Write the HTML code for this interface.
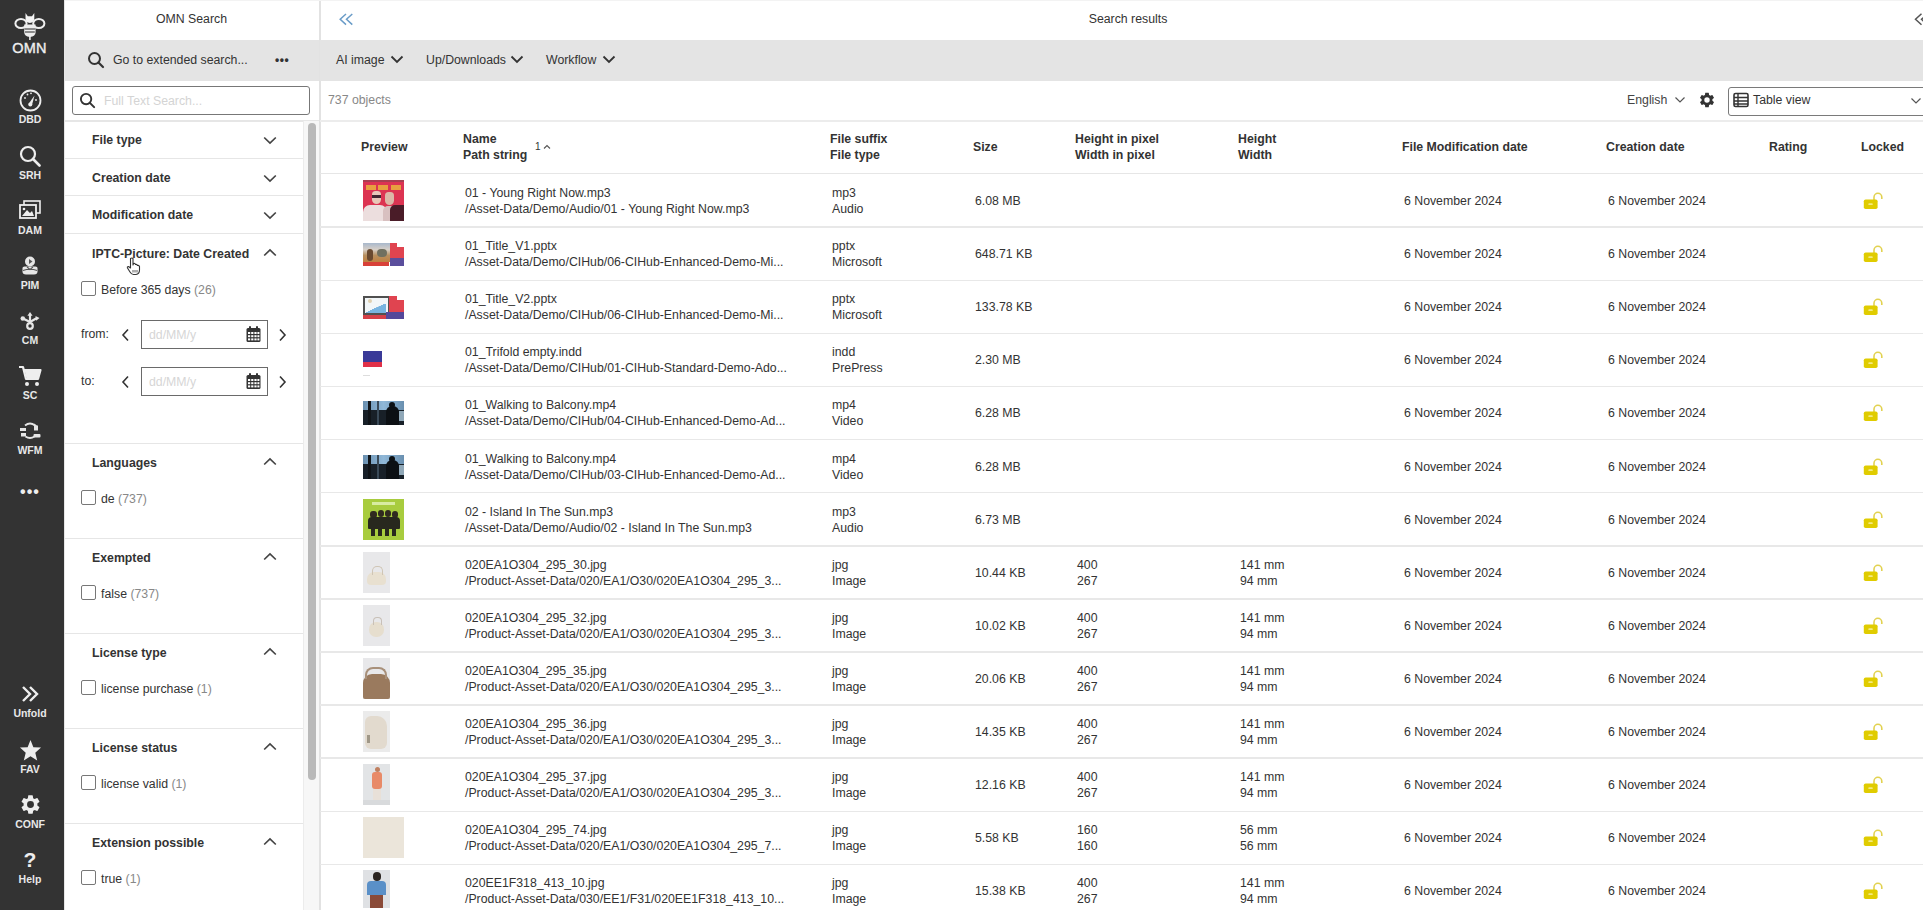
<!DOCTYPE html>
<html><head><meta charset="utf-8"><title>OMN Search</title>
<style>
html,body{margin:0;padding:0;}
body{width:1923px;height:910px;overflow:hidden;position:relative;background:#fff;font-family:"Liberation Sans",sans-serif;color:#333;font-size:12.3px;}
.abs{position:absolute}
#side{position:absolute;left:0;top:0;width:64px;height:910px;background:#333;}
.si{position:absolute;left:0;width:60px;text-align:center;color:#eee}
.sl{position:absolute;left:0;width:60px;text-align:center;color:#e8e8e8;font-size:10.5px;font-weight:bold;line-height:11px}
#fp{position:absolute;left:64px;top:0;width:255px;height:910px;background:#fff}
.hdr{position:absolute;top:0;height:40px;line-height:38px;text-align:center;font-size:12.3px;color:#333}
.tb{position:absolute;top:40px;height:40.5px;background:#e4e4e4}
.sec{position:absolute;left:0;width:240px;border-bottom:1.5px solid #e6e6e6;box-sizing:border-box}
.stitle{position:absolute;left:28px;font-weight:bold;font-size:12.3px;line-height:16px;color:#333}
.chev{position:absolute;left:199px;line-height:0}
.cb{position:absolute;left:17px;width:13px;height:13px;border:1.5px solid #777;border-radius:2px;background:#fff}
.cbl{position:absolute;left:37px;line-height:16px;font-size:12.3px;color:#333}
.cnt{color:#888}
.rowline{position:absolute;left:320px;width:1603px;height:1.6px;background:#e8e8e8}
.th{position:absolute;overflow:hidden}
.c1{position:absolute;line-height:16px;white-space:nowrap}
.c2{position:absolute;line-height:16px;white-space:nowrap}
.hc{position:absolute;font-weight:bold;line-height:16px;white-space:nowrap}
.lock{position:absolute;line-height:0}
</style></head><body>
<div id="side">
  <div class="abs" style="left:14px;top:12px;line-height:0"><svg width="32" height="29" viewBox="0 0 32 29"><g fill="none" stroke="#eee" stroke-width="2"><ellipse cx="7" cy="11.5" rx="5.6" ry="4.6"/><ellipse cx="24.8" cy="11.5" rx="5.6" ry="4.6"/></g><path d="M11.5 1 L13.8 4.2 L18 4.2 L20.3 1 L20.3 6 Q20.5 10.5 15.9 11 Q11.3 10.5 11.5 6 Z" fill="#f4f4f4"/><path d="M10.2 12.5 H21.6 V20 Q21.6 24.5 15.9 25 Q10.2 24.5 10.2 20 Z" fill="#eee"/><g stroke="#555" stroke-width="1.3"><line x1="10.5" y1="17" x2="21.3" y2="17"/><line x1="11" y1="20" x2="20.8" y2="20"/></g><path d="M15.9 24 V28" stroke="#eee" stroke-width="1.6"/></svg></div>
  <div class="abs" style="left:11px;top:41px;width:37px;text-align:center;font-size:14.5px;line-height:14px;letter-spacing:0.3px;color:#eee;-webkit-text-stroke:0.4px #eee">OMN</div>
  <div class="si" style="top:89px"><svg width="23" height="23" viewBox="0 0 23 23"><circle cx="11.5" cy="11.5" r="10" fill="none" stroke="#eee" stroke-width="1.8"/><path d="M9.5 15 L15.5 6.5 L13 16 Z" fill="#eee"/><circle cx="11.3" cy="15.5" r="2" fill="#eee"/><g fill="#eee"><circle cx="6" cy="9" r="0.9"/><circle cx="8.5" cy="5.5" r="0.9"/><circle cx="12" cy="4.3" r="0.9"/><circle cx="17" cy="11" r="0.9"/></g></svg></div>
  <div class="sl" style="top:114px">DBD</div>
  <div class="si" style="top:145px"><svg width="23" height="22" viewBox="0 0 23 22"><circle cx="9" cy="9" r="7" fill="none" stroke="#eee" stroke-width="2.2"/><path d="M14 14 L20.5 20.5" stroke="#eee" stroke-width="2.6" stroke-linecap="round"/></svg></div>
  <div class="sl" style="top:170px">SRH</div>
  <div class="si" style="top:200px"><svg width="24" height="20" viewBox="0 0 24 20"><rect x="6" y="1" width="16" height="12" fill="none" stroke="#eee" stroke-width="1.6"/><rect x="2" y="5" width="16" height="13" fill="#333" stroke="#eee" stroke-width="1.8"/><path d="M4 16 L9 10 L12 13 L14 11 L16 16 Z" fill="#eee"/><circle cx="6" cy="9" r="1.3" fill="#eee"/></svg></div>
  <div class="sl" style="top:225px">DAM</div>
  <div class="si" style="top:256px"><svg width="18" height="20" viewBox="0 0 18 20"><circle cx="9" cy="5.5" r="5" fill="#e6e6e6"/><path d="M8 3 L11.5 5.5 L8 8 Z" fill="#555"/><path d="M1.5 12 Q1.5 10.5 3.5 10.5 H14.5 Q16.5 10.5 16.5 12 V15.5 Q16.5 18.5 13 18.5 H5 Q1.5 18.5 1.5 15.5 Z" fill="#e6e6e6"/><path d="M2 14.5 Q9 12 16 14.5 M6 11 L9 13.5 L12 11" fill="none" stroke="#555" stroke-width="1.1"/></svg></div>
  <div class="sl" style="top:280px">PIM</div>
  <div class="si" style="top:312px"><svg width="20" height="18" viewBox="0 0 20 18"><g stroke="#e6e6e6" stroke-width="2.2" fill="none" stroke-linecap="round"><path d="M10 3 V10"/><path d="M10 10 L3 6.5"/><path d="M10 10 L16 6.5"/><circle cx="10" cy="14" r="2.8"/></g><path d="M10 0 L12.6 3.8 H7.4 Z" fill="#e6e6e6"/><circle cx="2.8" cy="6.5" r="2.3" fill="#e6e6e6"/><path d="M19.5 6 L15.5 4 L16.2 8.8 Z" fill="#e6e6e6"/></svg></div>
  <div class="sl" style="top:335px">CM</div>
  <div class="si" style="top:365px"><svg width="24" height="22" viewBox="0 0 24 22"><path d="M1 2 H5 L8 14 H20 L22.5 5 H6" fill="none" stroke="#eee" stroke-width="2.2" stroke-linejoin="round"/><path d="M6.5 5 H22.5 L20 13.5 H8.5 Z" fill="#eee"/><circle cx="9" cy="19" r="2" fill="#eee"/><circle cx="19" cy="19" r="2" fill="#eee"/></svg></div>
  <div class="sl" style="top:390px">SC</div>
  <div class="si" style="top:422px"><svg width="22" height="18" viewBox="0 0 22 18"><g fill="none" stroke="#e6e6e6" stroke-width="1.8"><path d="M6 3.5 Q11 -0.5 16 3.5"/><path d="M6.5 14.5 Q11 17.5 15.5 14.5"/></g><g fill="#e6e6e6"><rect x="1" y="6" width="6" height="3"/><rect x="2" y="11" width="5" height="3.5"/><rect x="15" y="3.5" width="4" height="5"/><rect x="14.5" y="12" width="7" height="3.5" rx="1"/><path d="M15 1.5 L18 3.5 L15 6 Z"/></g></svg></div>
  <div class="sl" style="top:445px">WFM</div>
  <div class="si" style="top:485px;font-size:16px;font-weight:bold;letter-spacing:1px;line-height:14px">&bull;&bull;&bull;</div>
  <div class="si" style="top:685px"><svg width="20" height="18" viewBox="0 0 20 18"><path d="M3 2 L10 9 L3 16 M10 2 L17 9 L10 16" fill="none" stroke="#eee" stroke-width="2.4"/></svg></div>
  <div class="sl" style="top:708px">Unfold</div>
  <div class="si" style="top:739px"><svg width="23" height="22" viewBox="0 0 24 23"><path d="M12 1 L15 8.5 L23 9 L17 14.5 L19 22.5 L12 18 L5 22.5 L7 14.5 L1 9 L9 8.5 Z" fill="#eee"/></svg></div>
  <div class="sl" style="top:764px">FAV</div>
  <div class="si" style="top:793px"><svg width="23" height="23" viewBox="0 0 24 24"><path fill="#eee" d="M19.14 12.94c.04-.3.06-.61.06-.94 0-.32-.02-.64-.07-.94l2.03-1.58a.49.49 0 0 0 .12-.61l-1.92-3.32a.49.49 0 0 0-.59-.22l-2.39.96c-.5-.38-1.03-.7-1.62-.94l-.36-2.54a.48.48 0 0 0-.48-.41h-3.84c-.24 0-.43.17-.47.41l-.36 2.54c-.59.24-1.13.57-1.62.94l-2.39-.96a.49.49 0 0 0-.59.22L2.74 8.87a.48.48 0 0 0 .12.61l2.03 1.58c-.05.3-.09.63-.09.94s.02.64.07.94l-2.03 1.58a.49.49 0 0 0-.12.61l1.92 3.32c.12.22.37.29.59.22l2.39-.96c.5.38 1.03.7 1.62.94l.36 2.54c.05.24.24.41.48.41h3.84c.24 0 .44-.17.47-.41l.36-2.54c.59-.24 1.13-.56 1.62-.94l2.39.96c.22.08.47 0 .59-.22l1.92-3.32a.48.48 0 0 0-.12-.61l-2.01-1.58zM12 15.6A3.6 3.6 0 1 1 12 8.4a3.6 3.6 0 0 1 0 7.2z"/></svg></div>
  <div class="sl" style="top:819px">CONF</div>
  <div class="si" style="top:849px;font-size:21px;line-height:22px;color:#eee;font-weight:bold">?</div>
  <div class="sl" style="top:874px">Help</div>
</div>

<div class="abs" style="left:64px;top:0;width:1859px;height:1px;background:#f3f3f3;z-index:5"></div>
<div class="abs" style="left:64px;top:0;width:1px;height:910px;background:#e6e6e6;z-index:6"></div>
<div id="fp">
  <div class="hdr" style="left:0;width:255px">OMN Search</div>
  <div class="tb" style="left:0;width:255px"></div>
  <div class="abs" style="left:23px;top:51px;line-height:0"><svg width="18" height="18" viewBox="0 0 18 18"><circle cx="7.5" cy="7.5" r="5.5" fill="none" stroke="#333" stroke-width="2"/><path d="M11.5 11.5 L16 16" stroke="#333" stroke-width="2.2" stroke-linecap="round"/></svg></div>
  <div class="abs" style="left:49px;top:52px;line-height:16px">Go to extended search...</div>
  <div class="abs" style="left:211px;top:52px;line-height:16px;font-weight:bold;font-size:12px;letter-spacing:0.5px">&bull;&bull;&bull;</div>
  <div class="abs" style="left:8px;top:86px;width:236px;height:27px;border:1.6px solid #777;border-radius:3px;box-sizing:content-box"></div>
  <div class="abs" style="left:15px;top:92px;line-height:0"><svg width="17" height="17" viewBox="0 0 18 18"><circle cx="7.5" cy="7.5" r="5.5" fill="none" stroke="#333" stroke-width="2"/><path d="M11.5 11.5 L16 16" stroke="#333" stroke-width="2.2" stroke-linecap="round"/></svg></div>
  <div class="abs" style="left:40px;top:93px;line-height:16px;color:#d4d4d4">Full Text Search...</div>
  <div class="abs" style="left:0;top:120px;width:255px;height:1.5px;background:#e6e6e6"></div>
  <div class="sec" style="top:121px;height:38px"><div class="stitle" style="top:11.0px">File type</div><div class="chev" style="top:15.0px"><svg width="14" height="9" viewBox="0 0 14 9"><path d="M1.2 1.5 L7 7 L12.8 1.5" fill="none" stroke="#444" stroke-width="1.7"/></svg></div></div>
  <div class="sec" style="top:159px;height:37px"><div class="stitle" style="top:10.5px">Creation date</div><div class="chev" style="top:14.5px"><svg width="14" height="9" viewBox="0 0 14 9"><path d="M1.2 1.5 L7 7 L12.8 1.5" fill="none" stroke="#444" stroke-width="1.7"/></svg></div></div>
  <div class="sec" style="top:196px;height:38px"><div class="stitle" style="top:11.0px">Modification date</div><div class="chev" style="top:15.0px"><svg width="14" height="9" viewBox="0 0 14 9"><path d="M1.2 1.5 L7 7 L12.8 1.5" fill="none" stroke="#444" stroke-width="1.7"/></svg></div></div>
  <div class="sec" style="top:234px;height:210px">
    <div class="stitle" style="top:11.5px">IPTC-Picture: Date Created</div><div class="chev" style="top:14px"><svg width="14" height="9" viewBox="0 0 14 9"><path d="M1.2 7.5 L7 2 L12.8 7.5" fill="none" stroke="#444" stroke-width="1.7"/></svg></div>
    <div class="cb" style="top:47px"></div><div class="cbl" style="top:48px">Before 365 days <span class="cnt">(26)</span></div>
    <div class="abs" style="left:17px;top:92px;line-height:16px">from:</div>
    <div class="abs" style="left:57px;top:94px;line-height:0"><svg width="9" height="14" viewBox="0 0 9 14"><path d="M7 1.5 L2 7 L7 12.5" fill="none" stroke="#333" stroke-width="1.6"/></svg></div>
    <div class="abs" style="left:77px;top:86px;width:125px;height:27px;border:1.6px solid #6a6a6a;"></div>
    <div class="abs" style="left:85px;top:93px;line-height:16px;color:#d6d6d6">dd/MM/y</div>
    <div class="abs" style="left:182px;top:92px;line-height:0"><svg width="15" height="16" viewBox="0 0 15 16"><rect x="0.5" y="2" width="14" height="14" rx="1.5" fill="#333"/><rect x="3" y="0" width="2" height="4" rx="1" fill="#333"/><rect x="10" y="0" width="2" height="4" rx="1" fill="#333"/><g fill="#fff"><rect x="2" y="6" width="2.2" height="2"/><rect x="5.2" y="6" width="2.2" height="2"/><rect x="8.4" y="6" width="2.2" height="2"/><rect x="11.4" y="6" width="2" height="2"/><rect x="2" y="9.2" width="2.2" height="2"/><rect x="5.2" y="9.2" width="2.2" height="2"/><rect x="8.4" y="9.2" width="2.2" height="2"/><rect x="11.4" y="9.2" width="2" height="2"/><rect x="2" y="12.4" width="2.2" height="2"/><rect x="5.2" y="12.4" width="2.2" height="2"/><rect x="8.4" y="12.4" width="2.2" height="2"/><rect x="11.4" y="12.4" width="2" height="2"/></g></svg></div>
    <div class="abs" style="left:214px;top:94px;line-height:0"><svg width="9" height="14" viewBox="0 0 9 14"><path d="M2 1.5 L7 7 L2 12.5" fill="none" stroke="#333" stroke-width="1.6"/></svg></div>
    <div class="abs" style="left:17px;top:139px;line-height:16px">to:</div>
    <div class="abs" style="left:57px;top:141px;line-height:0"><svg width="9" height="14" viewBox="0 0 9 14"><path d="M7 1.5 L2 7 L7 12.5" fill="none" stroke="#333" stroke-width="1.6"/></svg></div>
    <div class="abs" style="left:77px;top:133px;width:125px;height:27px;border:1.6px solid #6a6a6a;"></div>
    <div class="abs" style="left:85px;top:140px;line-height:16px;color:#d6d6d6">dd/MM/y</div>
    <div class="abs" style="left:182px;top:139px;line-height:0"><svg width="15" height="16" viewBox="0 0 15 16"><rect x="0.5" y="2" width="14" height="14" rx="1.5" fill="#333"/><rect x="3" y="0" width="2" height="4" rx="1" fill="#333"/><rect x="10" y="0" width="2" height="4" rx="1" fill="#333"/><g fill="#fff"><rect x="2" y="6" width="2.2" height="2"/><rect x="5.2" y="6" width="2.2" height="2"/><rect x="8.4" y="6" width="2.2" height="2"/><rect x="11.4" y="6" width="2" height="2"/><rect x="2" y="9.2" width="2.2" height="2"/><rect x="5.2" y="9.2" width="2.2" height="2"/><rect x="8.4" y="9.2" width="2.2" height="2"/><rect x="11.4" y="9.2" width="2" height="2"/><rect x="2" y="12.4" width="2.2" height="2"/><rect x="5.2" y="12.4" width="2.2" height="2"/><rect x="8.4" y="12.4" width="2.2" height="2"/><rect x="11.4" y="12.4" width="2" height="2"/></g></svg></div>
    <div class="abs" style="left:214px;top:141px;line-height:0"><svg width="9" height="14" viewBox="0 0 9 14"><path d="M2 1.5 L7 7 L2 12.5" fill="none" stroke="#333" stroke-width="1.6"/></svg></div>
  </div>
  <div class="sec" style="top:443px;height:96.3px"><div class="stitle" style="top:11.5px">Languages</div><div class="chev" style="top:14px"><svg width="14" height="9" viewBox="0 0 14 9"><path d="M1.2 7.5 L7 2 L12.8 7.5" fill="none" stroke="#444" stroke-width="1.7"/></svg></div><div class="cb" style="top:47px"></div><div class="cbl" style="top:47.8px">de <span class="cnt">(737)</span></div></div>
  <div class="sec" style="top:538px;height:96.3px"><div class="stitle" style="top:11.5px">Exempted</div><div class="chev" style="top:14px"><svg width="14" height="9" viewBox="0 0 14 9"><path d="M1.2 7.5 L7 2 L12.8 7.5" fill="none" stroke="#444" stroke-width="1.7"/></svg></div><div class="cb" style="top:47px"></div><div class="cbl" style="top:47.8px">false <span class="cnt">(737)</span></div></div>
  <div class="sec" style="top:633px;height:96.3px"><div class="stitle" style="top:11.5px">License type</div><div class="chev" style="top:14px"><svg width="14" height="9" viewBox="0 0 14 9"><path d="M1.2 7.5 L7 2 L12.8 7.5" fill="none" stroke="#444" stroke-width="1.7"/></svg></div><div class="cb" style="top:47px"></div><div class="cbl" style="top:47.8px">license purchase <span class="cnt">(1)</span></div></div>
  <div class="sec" style="top:728px;height:96.3px"><div class="stitle" style="top:11.5px">License status</div><div class="chev" style="top:14px"><svg width="14" height="9" viewBox="0 0 14 9"><path d="M1.2 7.5 L7 2 L12.8 7.5" fill="none" stroke="#444" stroke-width="1.7"/></svg></div><div class="cb" style="top:47px"></div><div class="cbl" style="top:47.8px">license valid <span class="cnt">(1)</span></div></div>
  <div class="sec" style="top:823px;height:96.3px"><div class="stitle" style="top:11.5px">Extension possible</div><div class="chev" style="top:14px"><svg width="14" height="9" viewBox="0 0 14 9"><path d="M1.2 7.5 L7 2 L12.8 7.5" fill="none" stroke="#444" stroke-width="1.7"/></svg></div><div class="cb" style="top:47px"></div><div class="cbl" style="top:47.8px">true <span class="cnt">(1)</span></div></div>
  <div class="abs" style="left:239px;top:121px;width:16px;height:789px;background:#f7f7f7;border-left:1px solid #ececec;box-sizing:border-box"></div>
  <div class="abs" style="left:244px;top:123px;width:7.6px;height:657px;background:#b9b9b9;border-radius:4px"></div>
</div>
<div class="abs" style="left:319px;top:0;width:1.5px;height:910px;background:#e2e2e2"></div>

<div id="rp" class="abs" style="left:320px;top:0;width:1603px;height:910px">
  <div class="abs" style="left:18px;top:12px;line-height:0"><svg width="16" height="14" viewBox="0 0 16 14"><path d="M8 2 L2.2 7.3 L8 12.6 M14.3 2 L8.5 7.3 L14.3 12.6" fill="none" stroke="#6a9cc8" stroke-width="1.5"/></svg></div>
  <div class="hdr" style="left:0;width:1616px">Search results</div>
  <div class="abs" style="left:1593px;top:12px;line-height:0"><svg width="10" height="14" viewBox="0 0 10 14"><path d="M8.5 1.8 L2.5 7.3 L8.5 12.8" fill="none" stroke="#555" stroke-width="1.5"/><path d="M14.5 1.8 L8.5 7.3 L14.5 12.8" fill="none" stroke="#555" stroke-width="1.5"/></svg></div>
  <div class="tb" style="left:0;width:1603px"></div>
  <div class="abs" style="left:16px;top:52px;line-height:16px">AI image</div>
  <div class="abs" style="left:70px;top:55px;line-height:0"><svg width="14" height="9" viewBox="0 0 14 9"><path d="M1.5 1.5 L7 7 L12.5 1.5" fill="none" stroke="#333" stroke-width="1.8"/></svg></div>
  <div class="abs" style="left:106px;top:52px;line-height:16px">Up/Downloads</div>
  <div class="abs" style="left:190px;top:55px;line-height:0"><svg width="14" height="9" viewBox="0 0 14 9"><path d="M1.5 1.5 L7 7 L12.5 1.5" fill="none" stroke="#333" stroke-width="1.8"/></svg></div>
  <div class="abs" style="left:226px;top:52px;line-height:16px">Workflow</div>
  <div class="abs" style="left:282px;top:55px;line-height:0"><svg width="14" height="9" viewBox="0 0 14 9"><path d="M1.5 1.5 L7 7 L12.5 1.5" fill="none" stroke="#333" stroke-width="1.8"/></svg></div>
  <div class="abs" style="left:8px;top:92px;line-height:16px;color:#888">737 objects</div>
  <div class="abs" style="left:1307px;top:92px;line-height:16px;color:#444">English</div>
  <div class="abs" style="left:1354px;top:96px;line-height:0"><svg width="12" height="8" viewBox="0 0 12 8"><path d="M1.5 1.5 L6 6 L10.5 1.5" fill="none" stroke="#555" stroke-width="1.2"/></svg></div>
  <div class="abs" style="left:1378px;top:91px;line-height:0"><svg width="18" height="18" viewBox="0 0 24 24"><path fill="#333" d="M19.14 12.94c.04-.3.06-.61.06-.94 0-.32-.02-.64-.07-.94l2.03-1.58a.49.49 0 0 0 .12-.61l-1.920-3.32a.49.49 0 0 0-.59-.22l-2.39.96c-.5-.38-1.030-.7-1.62-.94l-.36-2.54a.48.48 0 0 0-.48-.41h-3.84c-.24 0-.43.17-.47.41l-.36 2.54c-.59.24-1.13.57-1.62.94l-2.39-.96a.49.49 0 0 0-.59.22L2.74 8.87a.48.48 0 0 0 .12.61l2.03 1.58c-.05.3-.09.63-.09.94s.02.64.07.94l-2.03 1.58a.49.49 0 0 0-.12.61l1.92 3.32c.12.22.37.29.59.22l2.39-.96c.5.38 1.03.7 1.62.94l.36 2.54c.05.24.24.41.48.41h3.84c.24 0 .44-.17.47-.41l.36-2.54c.59-.24 1.13-.56 1.62-.94l2.39.96c.22.08.47 0 .59-.22l1.92-3.32a.48.48 0 0 0-.12-.61l-2.010-1.58zM12 15.6A3.6 3.6 0 1 1 12 8.4a3.6 3.6 0 0 1 0 7.2z"/></svg></div>
  <div class="abs" style="left:1408px;top:87px;width:210px;height:27px;border:1.8px solid #7a7a7a;border-radius:3px"></div>
  <div class="abs" style="left:1413px;top:92px;line-height:0"><svg width="16" height="16" viewBox="0 0 16 16"><rect x="1" y="1.5" width="14" height="13" rx="1.5" fill="none" stroke="#333" stroke-width="1.6"/><path d="M1 5.5 H15 M1 9 H15 M1 12 H15 M5 1.5 V14.5" stroke="#333" stroke-width="1.4"/></svg></div>
  <div class="abs" style="left:1433px;top:92px;line-height:16px">Table view</div>
  <div class="abs" style="left:1590px;top:97px;line-height:0"><svg width="12" height="8" viewBox="0 0 12 8"><path d="M1.5 1.5 L6 6 L10.5 1.5" fill="none" stroke="#555" stroke-width="1.2"/></svg></div>
  <div class="abs" style="left:0;top:120px;width:1603px;height:1.5px;background:#ececec"></div>
  <div class="abs" style="left:0;top:172.6px;width:1603px;height:1.6px;background:#e6e6e6"></div>
</div>
<div class="hc" style="left:361px;top:139px">Preview</div>
<div class="hc" style="left:463px;top:131px">Name<br>Path string</div>
<div class="abs" style="left:535px;top:140px;line-height:14px;font-size:10px">1</div><div class="abs" style="left:543px;top:144px;line-height:0"><svg width="8" height="6" viewBox="0 0 8 6"><path d="M1 4.5 L4 1.5 L7 4.5" fill="none" stroke="#555" stroke-width="1.1"/></svg></div>
<div class="hc" style="left:830px;top:131px">File suffix<br>File type</div>
<div class="hc" style="left:973px;top:139px">Size</div>
<div class="hc" style="left:1075px;top:131px">Height in pixel<br>Width in pixel</div>
<div class="hc" style="left:1238px;top:131px">Height<br>Width</div>
<div class="hc" style="left:1402px;top:139px">File Modification date</div>
<div class="hc" style="left:1606px;top:139px">Creation date</div>
<div class="hc" style="left:1769px;top:139px">Rating</div>
<div class="hc" style="left:1861px;top:139px">Locked</div>
<div class="rowline" style="top:226.40px"></div><div class="th" style="left:363px;top:180.0px;width:41px;height:41px"><div style="position:absolute;left:0px;top:0px;width:41px;height:41px;background:#dc3452;"></div><div style="position:absolute;left:0px;top:0px;width:41px;height:1.5px;background:#a84050;"></div><div style="position:absolute;left:3px;top:5px;width:10px;height:5px;background:#e8a040;"></div><div style="position:absolute;left:15px;top:5px;width:10px;height:5px;background:#e8a040;"></div><div style="position:absolute;left:28px;top:5px;width:10px;height:5px;background:#e8a040;"></div><div style="position:absolute;left:9px;top:11px;width:9px;height:13px;background:#e8c8b8;border-radius:4px 4px 5px 5px"></div><div style="position:absolute;left:9px;top:15px;width:9px;height:3px;background:#402830;"></div><div style="position:absolute;left:22px;top:12px;width:9px;height:13px;background:#dcb8a8;border-radius:4px 4px 5px 5px"></div><div style="position:absolute;left:0px;top:25px;width:24px;height:16px;background:#ecdede;border-radius:7px 7px 0 0"></div><div style="position:absolute;left:20px;top:26px;width:21px;height:15px;background:#d8c0c0;border-radius:5px 5px 0 0"></div><div style="position:absolute;left:27px;top:25px;width:14px;height:16px;background:#4a1c28;border-radius:5px 0 0 0"></div></div><div class="c2" style="left:465px;top:185.0px">01 - Young Right Now.mp3<br>/Asset-Data/Demo/Audio/01 - Young Right Now.mp3</div><div class="c2" style="left:832px;top:185.0px">mp3<br>Audio</div><div class="c1" style="left:975px;top:193.0px">6.08 MB</div><div class="c1" style="left:1404px;top:193.0px">6 November 2024</div><div class="c1" style="left:1608px;top:193.0px">6 November 2024</div><div class="lock" style="left:1862px;top:192.0px"><svg width="22" height="19" viewBox="0 0 22 19"><path d="M12 8 V5.2 A3.9 3.9 0 0 1 19.8 5.2 V7" fill="none" stroke="#e2d250" stroke-width="1.6"/><rect x="1.8" y="7.5" width="13.8" height="9.6" rx="1.8" fill="#e0cc00"/><rect x="6.3" y="11.2" width="4.5" height="1.9" rx="0.9" fill="#f4ea80"/></svg></div><div class="rowline" style="top:279.50px"></div><div class="th" style="left:363px;top:243.1px;width:41px;height:23px"><div style="position:absolute;left:0px;top:0px;width:27px;height:19px;background:linear-gradient(180deg,#a8b8cc 0%,#d8d0c8 35%,#b89060 65%,#c08040 100%);"></div><div style="position:absolute;left:4px;top:6px;width:6px;height:12px;background:#6a4a30;border-radius:3px"></div><div style="position:absolute;left:14px;top:6px;width:10px;height:8px;background:#707060;border-radius:4px"></div><div style="position:absolute;left:0px;top:19px;width:26px;height:4px;background:#d84038;"></div><div style="position:absolute;left:27px;top:0px;width:14px;height:16px;background:#e04450;"></div><div style="position:absolute;left:34px;top:0px;width:7px;height:4px;background:#fff;"></div><div style="position:absolute;left:27px;top:15px;width:14px;height:8px;background:#5a4e9c;"></div></div><div class="c2" style="left:465px;top:238.1px">01_Title_V1.pptx<br>/Asset-Data/Demo/CIHub/06-CIHub-Enhanced-Demo-Mi...</div><div class="c2" style="left:832px;top:238.1px">pptx<br>Microsoft</div><div class="c1" style="left:975px;top:246.1px">648.71 KB</div><div class="c1" style="left:1404px;top:246.1px">6 November 2024</div><div class="c1" style="left:1608px;top:246.1px">6 November 2024</div><div class="lock" style="left:1862px;top:245.1px"><svg width="22" height="19" viewBox="0 0 22 19"><path d="M12 8 V5.2 A3.9 3.9 0 0 1 19.8 5.2 V7" fill="none" stroke="#e2d250" stroke-width="1.6"/><rect x="1.8" y="7.5" width="13.8" height="9.6" rx="1.8" fill="#e0cc00"/><rect x="6.3" y="11.2" width="4.5" height="1.9" rx="0.9" fill="#f4ea80"/></svg></div><div class="rowline" style="top:332.60px"></div><div class="th" style="left:363px;top:296.2px;width:41px;height:23px"><div style="position:absolute;left:0px;top:0px;width:26px;height:19px;background:#505050;"></div><div style="position:absolute;left:1.5px;top:2px;width:23px;height:15px;background:#f2f6f8;"></div><div style="position:absolute;left:3px;top:8px;width:20px;height:9px;background:linear-gradient(155deg,transparent 45%,#78b4e0 46%);"></div><div style="position:absolute;left:5px;top:3px;width:4px;height:4px;background:#e0d0b0;border-radius:2px"></div><div style="position:absolute;left:0px;top:19px;width:23px;height:4px;background:#d44048;"></div><div style="position:absolute;left:26px;top:0px;width:15px;height:16px;background:#e04450;"></div><div style="position:absolute;left:34px;top:0px;width:7px;height:4px;background:#fff;"></div><div style="position:absolute;left:23px;top:16px;width:18px;height:7px;background:#54489a;"></div></div><div class="c2" style="left:465px;top:291.2px">01_Title_V2.pptx<br>/Asset-Data/Demo/CIHub/06-CIHub-Enhanced-Demo-Mi...</div><div class="c2" style="left:832px;top:291.2px">pptx<br>Microsoft</div><div class="c1" style="left:975px;top:299.2px">133.78 KB</div><div class="c1" style="left:1404px;top:299.2px">6 November 2024</div><div class="c1" style="left:1608px;top:299.2px">6 November 2024</div><div class="lock" style="left:1862px;top:298.2px"><svg width="22" height="19" viewBox="0 0 22 19"><path d="M12 8 V5.2 A3.9 3.9 0 0 1 19.8 5.2 V7" fill="none" stroke="#e2d250" stroke-width="1.6"/><rect x="1.8" y="7.5" width="13.8" height="9.6" rx="1.8" fill="#e0cc00"/><rect x="6.3" y="11.2" width="4.5" height="1.9" rx="0.9" fill="#f4ea80"/></svg></div><div class="rowline" style="top:385.70px"></div><div class="th" style="left:363px;top:351.3px;width:19px;height:16px;background:#3a3a98"><div style="position:absolute;left:0;top:11px;width:19px;height:5px;background:#e03048"></div></div><div class="th" style="left:363px;top:363.3px;width:7px;height:1px;background:#ddd;margin-top:-0px;transform:translateY(12px)"></div><div class="c2" style="left:465px;top:344.3px">01_Trifold empty.indd<br>/Asset-Data/Demo/CIHub/01-CIHub-Standard-Demo-Ado...</div><div class="c2" style="left:832px;top:344.3px">indd<br>PrePress</div><div class="c1" style="left:975px;top:352.3px">2.30 MB</div><div class="c1" style="left:1404px;top:352.3px">6 November 2024</div><div class="c1" style="left:1608px;top:352.3px">6 November 2024</div><div class="lock" style="left:1862px;top:351.3px"><svg width="22" height="19" viewBox="0 0 22 19"><path d="M12 8 V5.2 A3.9 3.9 0 0 1 19.8 5.2 V7" fill="none" stroke="#e2d250" stroke-width="1.6"/><rect x="1.8" y="7.5" width="13.8" height="9.6" rx="1.8" fill="#e0cc00"/><rect x="6.3" y="11.2" width="4.5" height="1.9" rx="0.9" fill="#f4ea80"/></svg></div><div class="rowline" style="top:438.80px"></div><div class="th" style="left:363px;top:401.4px;width:41px;height:24px"><div style="position:absolute;left:0px;top:0px;width:41px;height:24px;background:#182028;"></div><div style="position:absolute;left:0px;top:0px;width:41px;height:9px;background:linear-gradient(90deg,#6a90b0,#90b8d8,#6a90b0);"></div><div style="position:absolute;left:5px;top:0px;width:3px;height:24px;background:#101418;"></div><div style="position:absolute;left:14px;top:0px;width:2px;height:24px;background:#3a4a58;"></div><div style="position:absolute;left:23px;top:5px;width:13px;height:19px;background:#0c1014;border-radius:6px 6px 0 0"></div><div style="position:absolute;left:26px;top:1px;width:6px;height:6px;background:#0c1014;border-radius:3px"></div><div style="position:absolute;left:36px;top:10px;width:5px;height:10px;background:#90a8b8;"></div></div><div class="c2" style="left:465px;top:397.4px">01_Walking to Balcony.mp4<br>/Asset-Data/Demo/CIHub/04-CIHub-Enhanced-Demo-Ad...</div><div class="c2" style="left:832px;top:397.4px">mp4<br>Video</div><div class="c1" style="left:975px;top:405.4px">6.28 MB</div><div class="c1" style="left:1404px;top:405.4px">6 November 2024</div><div class="c1" style="left:1608px;top:405.4px">6 November 2024</div><div class="lock" style="left:1862px;top:404.4px"><svg width="22" height="19" viewBox="0 0 22 19"><path d="M12 8 V5.2 A3.9 3.9 0 0 1 19.8 5.2 V7" fill="none" stroke="#e2d250" stroke-width="1.6"/><rect x="1.8" y="7.5" width="13.8" height="9.6" rx="1.8" fill="#e0cc00"/><rect x="6.3" y="11.2" width="4.5" height="1.9" rx="0.9" fill="#f4ea80"/></svg></div><div class="rowline" style="top:491.90px"></div><div class="th" style="left:363px;top:454.5px;width:41px;height:24px"><div style="position:absolute;left:0px;top:0px;width:41px;height:24px;background:#182028;"></div><div style="position:absolute;left:0px;top:0px;width:41px;height:9px;background:linear-gradient(90deg,#6a90b0,#90b8d8,#6a90b0);"></div><div style="position:absolute;left:5px;top:0px;width:3px;height:24px;background:#101418;"></div><div style="position:absolute;left:14px;top:0px;width:2px;height:24px;background:#3a4a58;"></div><div style="position:absolute;left:23px;top:5px;width:13px;height:19px;background:#0c1014;border-radius:6px 6px 0 0"></div><div style="position:absolute;left:26px;top:1px;width:6px;height:6px;background:#0c1014;border-radius:3px"></div><div style="position:absolute;left:36px;top:10px;width:5px;height:10px;background:#90a8b8;"></div></div><div class="c2" style="left:465px;top:450.5px">01_Walking to Balcony.mp4<br>/Asset-Data/Demo/CIHub/03-CIHub-Enhanced-Demo-Ad...</div><div class="c2" style="left:832px;top:450.5px">mp4<br>Video</div><div class="c1" style="left:975px;top:458.5px">6.28 MB</div><div class="c1" style="left:1404px;top:458.5px">6 November 2024</div><div class="c1" style="left:1608px;top:458.5px">6 November 2024</div><div class="lock" style="left:1862px;top:457.5px"><svg width="22" height="19" viewBox="0 0 22 19"><path d="M12 8 V5.2 A3.9 3.9 0 0 1 19.8 5.2 V7" fill="none" stroke="#e2d250" stroke-width="1.6"/><rect x="1.8" y="7.5" width="13.8" height="9.6" rx="1.8" fill="#e0cc00"/><rect x="6.3" y="11.2" width="4.5" height="1.9" rx="0.9" fill="#f4ea80"/></svg></div><div class="rowline" style="top:545.00px"></div><div class="th" style="left:363px;top:498.6px;width:41px;height:41px"><div style="position:absolute;left:0px;top:0px;width:41px;height:41px;background:#a8cc3e;"></div><div style="position:absolute;left:9px;top:3px;width:23px;height:3px;background:#d8eca0;"></div><div style="position:absolute;left:7px;top:12px;width:7px;height:7px;background:#302a20;border-radius:3px"></div><div style="position:absolute;left:15px;top:11px;width:6px;height:7px;background:#302a20;border-radius:3px"></div><div style="position:absolute;left:22px;top:11px;width:6px;height:7px;background:#302a20;border-radius:3px"></div><div style="position:absolute;left:29px;top:12px;width:6px;height:7px;background:#302a20;border-radius:3px"></div><div style="position:absolute;left:5px;top:18px;width:32px;height:12px;background:#28281e;border-radius:4px 4px 1px 1px"></div><div style="position:absolute;left:8px;top:30px;width:4px;height:7px;background:#28281e;"></div><div style="position:absolute;left:15px;top:30px;width:4px;height:7px;background:#28281e;"></div><div style="position:absolute;left:22px;top:30px;width:4px;height:7px;background:#28281e;"></div><div style="position:absolute;left:29px;top:30px;width:4px;height:7px;background:#28281e;"></div></div><div class="c2" style="left:465px;top:503.6px">02 - Island In The Sun.mp3<br>/Asset-Data/Demo/Audio/02 - Island In The Sun.mp3</div><div class="c2" style="left:832px;top:503.6px">mp3<br>Audio</div><div class="c1" style="left:975px;top:511.6px">6.73 MB</div><div class="c1" style="left:1404px;top:511.6px">6 November 2024</div><div class="c1" style="left:1608px;top:511.6px">6 November 2024</div><div class="lock" style="left:1862px;top:510.6px"><svg width="22" height="19" viewBox="0 0 22 19"><path d="M12 8 V5.2 A3.9 3.9 0 0 1 19.8 5.2 V7" fill="none" stroke="#e2d250" stroke-width="1.6"/><rect x="1.8" y="7.5" width="13.8" height="9.6" rx="1.8" fill="#e0cc00"/><rect x="6.3" y="11.2" width="4.5" height="1.9" rx="0.9" fill="#f4ea80"/></svg></div><div class="rowline" style="top:598.10px"></div><div class="th" style="left:363px;top:551.7px;width:27px;height:41px"><div style="position:absolute;left:0px;top:0px;width:27px;height:41px;background:#e8e8ea;"></div><div style="position:absolute;left:4px;top:20px;width:19px;height:13px;background:#e8e0d0;border-radius:7px 7px 4px 4px"></div><div style="position:absolute;left:9px;top:14px;width:9px;height:8px;background:transparent;border:1.5px solid #cfc5b5;border-bottom:none;border-radius:5px 5px 0 0"></div></div><div class="c2" style="left:465px;top:556.7px">020EA1O304_295_30.jpg<br>/Product-Asset-Data/020/EA1/O30/020EA1O304_295_3...</div><div class="c2" style="left:832px;top:556.7px">jpg<br>Image</div><div class="c1" style="left:975px;top:564.7px">10.44 KB</div><div class="c2" style="left:1077px;top:556.7px">400<br>267</div><div class="c2" style="left:1240px;top:556.7px">141 mm<br>94 mm</div><div class="c1" style="left:1404px;top:564.7px">6 November 2024</div><div class="c1" style="left:1608px;top:564.7px">6 November 2024</div><div class="lock" style="left:1862px;top:563.7px"><svg width="22" height="19" viewBox="0 0 22 19"><path d="M12 8 V5.2 A3.9 3.9 0 0 1 19.8 5.2 V7" fill="none" stroke="#e2d250" stroke-width="1.6"/><rect x="1.8" y="7.5" width="13.8" height="9.6" rx="1.8" fill="#e0cc00"/><rect x="6.3" y="11.2" width="4.5" height="1.9" rx="0.9" fill="#f4ea80"/></svg></div><div class="rowline" style="top:651.20px"></div><div class="th" style="left:363px;top:604.8px;width:27px;height:41px"><div style="position:absolute;left:0px;top:0px;width:27px;height:41px;background:#e8e8ea;"></div><div style="position:absolute;left:6px;top:17px;width:15px;height:15px;background:#e6dece;border-radius:7px"></div><div style="position:absolute;left:10px;top:12px;width:7px;height:7px;background:transparent;border:1.5px solid #c8c0b8;border-bottom:none;border-radius:4px 4px 0 0"></div></div><div class="c2" style="left:465px;top:609.8px">020EA1O304_295_32.jpg<br>/Product-Asset-Data/020/EA1/O30/020EA1O304_295_3...</div><div class="c2" style="left:832px;top:609.8px">jpg<br>Image</div><div class="c1" style="left:975px;top:617.8px">10.02 KB</div><div class="c2" style="left:1077px;top:609.8px">400<br>267</div><div class="c2" style="left:1240px;top:609.8px">141 mm<br>94 mm</div><div class="c1" style="left:1404px;top:617.8px">6 November 2024</div><div class="c1" style="left:1608px;top:617.8px">6 November 2024</div><div class="lock" style="left:1862px;top:616.8px"><svg width="22" height="19" viewBox="0 0 22 19"><path d="M12 8 V5.2 A3.9 3.9 0 0 1 19.8 5.2 V7" fill="none" stroke="#e2d250" stroke-width="1.6"/><rect x="1.8" y="7.5" width="13.8" height="9.6" rx="1.8" fill="#e0cc00"/><rect x="6.3" y="11.2" width="4.5" height="1.9" rx="0.9" fill="#f4ea80"/></svg></div><div class="rowline" style="top:704.30px"></div><div class="th" style="left:363px;top:657.9px;width:27px;height:41px"><div style="position:absolute;left:0px;top:0px;width:27px;height:41px;background:#e8e8ea;"></div><div style="position:absolute;left:0px;top:16px;width:27px;height:25px;background:#9a7a5e;border-radius:9px 9px 2px 2px"></div><div style="position:absolute;left:2px;top:9px;width:18px;height:10px;background:transparent;border:2px solid #a8907a;border-bottom:none;border-radius:8px 8px 0 0"></div></div><div class="c2" style="left:465px;top:662.9px">020EA1O304_295_35.jpg<br>/Product-Asset-Data/020/EA1/O30/020EA1O304_295_3...</div><div class="c2" style="left:832px;top:662.9px">jpg<br>Image</div><div class="c1" style="left:975px;top:670.9px">20.06 KB</div><div class="c2" style="left:1077px;top:662.9px">400<br>267</div><div class="c2" style="left:1240px;top:662.9px">141 mm<br>94 mm</div><div class="c1" style="left:1404px;top:670.9px">6 November 2024</div><div class="c1" style="left:1608px;top:670.9px">6 November 2024</div><div class="lock" style="left:1862px;top:669.9px"><svg width="22" height="19" viewBox="0 0 22 19"><path d="M12 8 V5.2 A3.9 3.9 0 0 1 19.8 5.2 V7" fill="none" stroke="#e2d250" stroke-width="1.6"/><rect x="1.8" y="7.5" width="13.8" height="9.6" rx="1.8" fill="#e0cc00"/><rect x="6.3" y="11.2" width="4.5" height="1.9" rx="0.9" fill="#f4ea80"/></svg></div><div class="rowline" style="top:757.40px"></div><div class="th" style="left:363px;top:711.0px;width:27px;height:41px"><div style="position:absolute;left:0px;top:0px;width:27px;height:41px;background:#ebebeb;"></div><div style="position:absolute;left:2px;top:5px;width:22px;height:33px;background:#e2dace;border-radius:6px 10px 6px 6px"></div><div style="position:absolute;left:4px;top:24px;width:3px;height:8px;background:#a09888;"></div></div><div class="c2" style="left:465px;top:716.0px">020EA1O304_295_36.jpg<br>/Product-Asset-Data/020/EA1/O30/020EA1O304_295_3...</div><div class="c2" style="left:832px;top:716.0px">jpg<br>Image</div><div class="c1" style="left:975px;top:724.0px">14.35 KB</div><div class="c2" style="left:1077px;top:716.0px">400<br>267</div><div class="c2" style="left:1240px;top:716.0px">141 mm<br>94 mm</div><div class="c1" style="left:1404px;top:724.0px">6 November 2024</div><div class="c1" style="left:1608px;top:724.0px">6 November 2024</div><div class="lock" style="left:1862px;top:723.0px"><svg width="22" height="19" viewBox="0 0 22 19"><path d="M12 8 V5.2 A3.9 3.9 0 0 1 19.8 5.2 V7" fill="none" stroke="#e2d250" stroke-width="1.6"/><rect x="1.8" y="7.5" width="13.8" height="9.6" rx="1.8" fill="#e0cc00"/><rect x="6.3" y="11.2" width="4.5" height="1.9" rx="0.9" fill="#f4ea80"/></svg></div><div class="rowline" style="top:810.50px"></div><div class="th" style="left:363px;top:764.1px;width:27px;height:41px"><div style="position:absolute;left:0px;top:0px;width:27px;height:41px;background:#e2e4e6;"></div><div style="position:absolute;left:12px;top:3px;width:5px;height:5px;background:#c08060;border-radius:3px"></div><div style="position:absolute;left:9px;top:8px;width:10px;height:17px;background:#e88a68;border-radius:3px"></div><div style="position:absolute;left:10px;top:25px;width:8px;height:12px;background:#e8e0d8;"></div><div style="position:absolute;left:0px;top:36px;width:27px;height:5px;background:#d8dadc;"></div></div><div class="c2" style="left:465px;top:769.1px">020EA1O304_295_37.jpg<br>/Product-Asset-Data/020/EA1/O30/020EA1O304_295_3...</div><div class="c2" style="left:832px;top:769.1px">jpg<br>Image</div><div class="c1" style="left:975px;top:777.1px">12.16 KB</div><div class="c2" style="left:1077px;top:769.1px">400<br>267</div><div class="c2" style="left:1240px;top:769.1px">141 mm<br>94 mm</div><div class="c1" style="left:1404px;top:777.1px">6 November 2024</div><div class="c1" style="left:1608px;top:777.1px">6 November 2024</div><div class="lock" style="left:1862px;top:776.1px"><svg width="22" height="19" viewBox="0 0 22 19"><path d="M12 8 V5.2 A3.9 3.9 0 0 1 19.8 5.2 V7" fill="none" stroke="#e2d250" stroke-width="1.6"/><rect x="1.8" y="7.5" width="13.8" height="9.6" rx="1.8" fill="#e0cc00"/><rect x="6.3" y="11.2" width="4.5" height="1.9" rx="0.9" fill="#f4ea80"/></svg></div><div class="rowline" style="top:863.60px"></div><div class="th" style="left:363px;top:817.2px;width:41px;height:41px;background:#ebe5da"></div><div class="c2" style="left:465px;top:822.2px">020EA1O304_295_74.jpg<br>/Product-Asset-Data/020/EA1/O30/020EA1O304_295_7...</div><div class="c2" style="left:832px;top:822.2px">jpg<br>Image</div><div class="c1" style="left:975px;top:830.2px">5.58 KB</div><div class="c2" style="left:1077px;top:822.2px">160<br>160</div><div class="c2" style="left:1240px;top:822.2px">56 mm<br>56 mm</div><div class="c1" style="left:1404px;top:830.2px">6 November 2024</div><div class="c1" style="left:1608px;top:830.2px">6 November 2024</div><div class="lock" style="left:1862px;top:829.2px"><svg width="22" height="19" viewBox="0 0 22 19"><path d="M12 8 V5.2 A3.9 3.9 0 0 1 19.8 5.2 V7" fill="none" stroke="#e2d250" stroke-width="1.6"/><rect x="1.8" y="7.5" width="13.8" height="9.6" rx="1.8" fill="#e0cc00"/><rect x="6.3" y="11.2" width="4.5" height="1.9" rx="0.9" fill="#f4ea80"/></svg></div><div class="rowline" style="top:916.70px"></div><div class="th" style="left:363px;top:870.3px;width:27px;height:38px"><div style="position:absolute;left:0px;top:0px;width:27px;height:38px;background:#dfe1e4;"></div><div style="position:absolute;left:10px;top:2px;width:8px;height:9px;background:#2a2420;border-radius:4px"></div><div style="position:absolute;left:4px;top:11px;width:19px;height:14px;background:#5a90c8;border-radius:4px 4px 0 0"></div><div style="position:absolute;left:7px;top:25px;width:13px;height:13px;background:#8a4a38;"></div></div><div class="c2" style="left:465px;top:875.3px">020EE1F318_413_10.jpg<br>/Product-Asset-Data/030/EE1/F31/020EE1F318_413_10...</div><div class="c2" style="left:832px;top:875.3px">jpg<br>Image</div><div class="c1" style="left:975px;top:883.3px">15.38 KB</div><div class="c2" style="left:1077px;top:875.3px">400<br>267</div><div class="c2" style="left:1240px;top:875.3px">141 mm<br>94 mm</div><div class="c1" style="left:1404px;top:883.3px">6 November 2024</div><div class="c1" style="left:1608px;top:883.3px">6 November 2024</div><div class="lock" style="left:1862px;top:882.3px"><svg width="22" height="19" viewBox="0 0 22 19"><path d="M12 8 V5.2 A3.9 3.9 0 0 1 19.8 5.2 V7" fill="none" stroke="#e2d250" stroke-width="1.6"/><rect x="1.8" y="7.5" width="13.8" height="9.6" rx="1.8" fill="#e0cc00"/><rect x="6.3" y="11.2" width="4.5" height="1.9" rx="0.9" fill="#f4ea80"/></svg></div>
<div class="abs" style="left:126px;top:257px;line-height:0"><svg width="16" height="19" viewBox="0 0 16 19"><path d="M4.5 1.5 Q6 0.5 7 1.5 V8 L7.5 6.5 Q9 6 9.5 7.5 Q11 7 11.5 8.5 Q13 8 13.5 9.5 V13 Q13.5 17 10 17.5 H7.5 Q5.5 17.5 4 15 L1.5 11 Q1 9.5 2.5 9.5 L4.5 11 Z" fill="#fff" stroke="#333" stroke-width="1.1" stroke-linejoin="round"/><path d="M7 13 V15.5 M9 13 V15.5 M11 13 V15.5" stroke="#333" stroke-width="0.8"/></svg></div>
</body></html>
